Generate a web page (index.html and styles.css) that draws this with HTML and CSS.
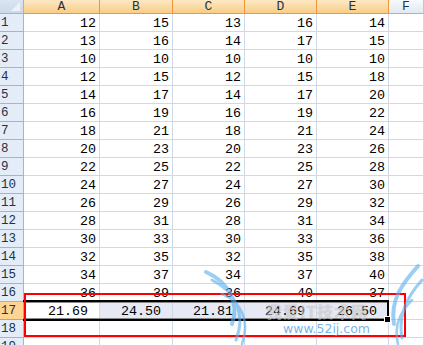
FILE: index.html
```html
<!DOCTYPE html>
<html>
<head>
<meta charset="utf-8">
<link rel="stylesheet" href="styles.css">
</head>
<body>
<div class="wrap">
  <div class="sheet">
    <div class="corner"><span class="tri"></span></div>
    <div class="ch sel">A</div><div class="ch sel">B</div><div class="ch sel">C</div><div class="ch sel">D</div><div class="ch sel">E</div><div class="ch">F</div>

    <div class="rh">1</div><div class="c">12</div><div class="c">15</div><div class="c">13</div><div class="c">16</div><div class="c">14</div><div class="c"></div>
    <div class="rh">2</div><div class="c">13</div><div class="c">16</div><div class="c">14</div><div class="c">17</div><div class="c">15</div><div class="c"></div>
    <div class="rh">3</div><div class="c">10</div><div class="c">10</div><div class="c">10</div><div class="c">10</div><div class="c">10</div><div class="c"></div>
    <div class="rh">4</div><div class="c">12</div><div class="c">15</div><div class="c">12</div><div class="c">15</div><div class="c">18</div><div class="c"></div>
    <div class="rh">5</div><div class="c">14</div><div class="c">17</div><div class="c">14</div><div class="c">17</div><div class="c">20</div><div class="c"></div>
    <div class="rh">6</div><div class="c">16</div><div class="c">19</div><div class="c">16</div><div class="c">19</div><div class="c">22</div><div class="c"></div>
    <div class="rh">7</div><div class="c">18</div><div class="c">21</div><div class="c">18</div><div class="c">21</div><div class="c">24</div><div class="c"></div>
    <div class="rh">8</div><div class="c">20</div><div class="c">23</div><div class="c">20</div><div class="c">23</div><div class="c">26</div><div class="c"></div>
    <div class="rh">9</div><div class="c">22</div><div class="c">25</div><div class="c">22</div><div class="c">25</div><div class="c">28</div><div class="c"></div>
    <div class="rh">10</div><div class="c">24</div><div class="c">27</div><div class="c">24</div><div class="c">27</div><div class="c">30</div><div class="c"></div>
    <div class="rh">11</div><div class="c">26</div><div class="c">29</div><div class="c">26</div><div class="c">29</div><div class="c">32</div><div class="c"></div>
    <div class="rh">12</div><div class="c">28</div><div class="c">31</div><div class="c">28</div><div class="c">31</div><div class="c">34</div><div class="c"></div>
    <div class="rh">13</div><div class="c">30</div><div class="c">33</div><div class="c">30</div><div class="c">33</div><div class="c">36</div><div class="c"></div>
    <div class="rh">14</div><div class="c">32</div><div class="c">35</div><div class="c">32</div><div class="c">35</div><div class="c">38</div><div class="c"></div>
    <div class="rh">15</div><div class="c">34</div><div class="c">37</div><div class="c">34</div><div class="c">37</div><div class="c">40</div><div class="c"></div>
    <div class="rh">16</div><div class="c">36</div><div class="c">39</div><div class="c">36</div><div class="c">40</div><div class="c">37</div><div class="c"></div>
    <div class="rh rsel">17</div><div class="c avg active">21.69</div><div class="c avg shade">24.50</div><div class="c avg shade">21.81</div><div class="c avg shade">24.69</div><div class="c avg shade">26.50</div><div class="c"></div>
    <div class="rh">18</div><div class="c"></div><div class="c"></div><div class="c"></div><div class="c"></div><div class="c"></div><div class="c"></div>
    <div class="rh">19</div><div class="c"></div><div class="c"></div><div class="c"></div><div class="c"></div><div class="c"></div><div class="c"></div>
  </div>

  <div class="selbox"><span class="handle"></span></div>
  <div class="redbox"></div>

  <svg class="wing" width="424" height="345" viewBox="0 0 424 345">
    <g fill="none" stroke="#5aaeee" stroke-linecap="round" opacity="0.6">
      <path d="M206 272 C228 282 240 302 232 324" stroke-width="4"/>
      <path d="M212 280 C236 292 246 314 236 340" stroke-width="3"/>
      <path d="M222 294 C242 302 250 322 242 344" stroke-width="2.5"/>
      <path d="M418 266 C402 284 390 300 394 324" stroke-width="4"/>
      <path d="M422 280 C406 298 398 316 402 338" stroke-width="3"/>
      <path d="M412 300 C398 314 394 328 398 344" stroke-width="2.5"/>
    </g>
  </svg>
  <div class="wm-cn">我爱IT技术网</div>
  <div class="wm-url">www.52ij.com</div>
</div>
</body>
</html>
```

FILE: styles.css
```css
html, body {
  margin: 0;
  padding: 0;
  background: #ffffff;
  overflow: hidden;
}

.wrap {
  position: relative;
  width: 424px;
  height: 345px;
  overflow: hidden;
}

.sheet {
  display: grid;
  grid-template-columns: 24px 76px 73px 72px 72px 72px 1fr;
  grid-template-rows: 14px;
  grid-auto-rows: 18px;
  font-family: "Liberation Mono", "DejaVu Sans Mono", monospace;
}

.sheet > div {
  box-sizing: border-box;
  border-right: 1px solid #d0d7e5;
  border-bottom: 1px solid #d0d7e5;
}

.corner {
  position: relative;
  background: linear-gradient(#dbe5f1, #cbd9ea);
  border-right-color: #9eb6ce !important;
  border-bottom-color: #9eb6ce !important;
}

.tri {
  position: absolute;
  right: 3px;
  bottom: 2px;
  width: 0;
  height: 0;
  border-left: 9px solid transparent;
  border-bottom: 9px solid #eef2f8;
}

.ch {
  font-size: 13px;
  line-height: 13px;
  text-align: center;
  color: #1c3346;
  background: linear-gradient(#f7f9fc, #e1e9f3);
  border-right-color: #b8c9db !important;
  border-bottom-color: #9eb6ce !important;
}

.ch.sel {
  background: linear-gradient(#fde8c4, #f8cd86);
  border-right-color: #f29536 !important;
  border-bottom-color: #f29536 !important;
}

.rh {
  font-size: 12.5px;
  line-height: 17px;
  padding-top: 1px;
  padding-left: 1px;
  color: #1c3346;
  background: #e4ecf7;
  border-right-color: #9eb6ce !important;
  border-bottom-color: #9eb6ce !important;
  white-space: nowrap;
}

.rh.rsel {
  background: #fdd491;
  border-right-color: #f29536 !important;
  border-bottom-color: #f29536 !important;
}

.c {
  font-size: 13.33px;
  line-height: 17px;
  padding-top: 1px;
  padding-right: 3px;
  text-align: right;
  color: #000;
  background: #fff;
}

.c.avg {
  padding-right: 11px;
}

.c.shade {
  background: #e6e9f4;
}

.c.active {
  background: #fff;
}

.selbox {
  position: absolute;
  left: 23px;
  top: 300px;
  width: 366px;
  height: 21px;
  box-sizing: border-box;
  border-top: 2px solid #000;
  border-bottom: 2px solid #000;
  border-right: 2px solid #000;
  box-shadow: inset 0 1px 0 #8a8a8a, inset 0 -1px 0 #8a8a8a;
}

.handle {
  position: absolute;
  right: -4px;
  bottom: -4px;
  width: 5px;
  height: 5px;
  background: #000;
  border: 1px solid #fff;
}

.redbox {
  position: absolute;
  left: 24px;
  top: 293px;
  width: 382px;
  height: 44px;
  box-sizing: border-box;
  border: 2px solid #ff0000;
}

.wing {
  position: absolute;
  left: 0;
  top: 0;
  pointer-events: none;
}

.wm-cn {
  position: absolute;
  left: 266px;
  top: 302px;
  font-family: "Noto Sans CJK SC", sans-serif;
  font-size: 16px;
  line-height: 18px;
  font-weight: bold;
  color: rgba(255, 255, 255, 0.45);
  text-shadow: 0 0 1px rgba(70, 70, 70, 0.35);
  letter-spacing: 1px;
}

.wm-url {
  position: absolute;
  left: 283px;
  top: 322px;
  font-family: "DejaVu Sans", "Liberation Sans", sans-serif;
  font-size: 12.5px;
  line-height: 14px;
  color: rgba(80, 160, 230, 0.8);
}
```
